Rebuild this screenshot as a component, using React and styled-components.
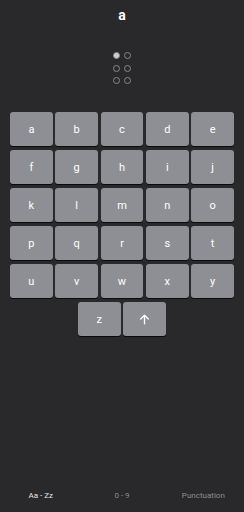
import styled, { createGlobalStyle } from "styled-components";

const GlobalStyle = createGlobalStyle`
  html, body {
    margin: 0;
    padding: 0;
    background: #29282a;
  }
  * {
    box-sizing: border-box;
  }
`;

const Styled = {
  Screen: styled.div`
    width: 244px;
    height: 512px;
    background: #29282a;
    display: flex;
    flex-direction: column;
    align-items: center;
    font-family: Roboto, "Liberation Sans", sans-serif;
    color: #ffffff;
  `,

  Title: styled.div`
    height: 30px;
    padding-top: 6px;
    font-size: 14px;
    font-weight: 700;
    line-height: 18px;
  `,

  Cell: styled.div`
    display: grid;
    grid-template-columns: repeat(2, 7px);
    column-gap: 4px;
    row-gap: 5.5px;
    margin-top: 22px;
  `,

  Dot: styled.span`
    width: 7px;
    height: 7px;
    border-radius: 50%;
    border: 1px solid #8a8a8c;
    background: ${({ filled }) => (filled ? "#cfcfd1" : "transparent")};
  `,

  Keyboard: styled.div`
    margin-top: 28px;
    width: 224px;
    display: flex;
    flex-direction: column;
    gap: 4px;
  `,

  Row: styled.div`
    display: flex;
    justify-content: center;
    gap: 2.5px;
  `,

  Key: styled.button`
    width: 43px;
    height: 34px;
    padding: 0;
    border: none;
    border-radius: 3px;
    background: #8e8f94;
    box-shadow: 0 1px 0 #0a0a0a;
    color: #ffffff;
    font-family: Roboto, "Liberation Sans", sans-serif;
    font-size: 11px;
    display: flex;
    align-items: center;
    justify-content: center;
  `,

  Spacer: styled.div`
    flex: 1;
  `,

  Tabs: styled.div`
    width: 100%;
    height: 30px;
    margin-bottom: 2px;
    display: grid;
    grid-template-columns: 1fr 1fr 1fr;
    align-items: center;
  `,

  Tab: styled.div`
    text-align: center;
    font-size: 8px;
    color: ${({ active }) => (active ? "#e6e6e6" : "#8d8d90")};
  `,
};

const rows = [
  ["a", "b", "c", "d", "e"],
  ["f", "g", "h", "i", "j"],
  ["k", "l", "m", "n", "o"],
  ["p", "q", "r", "s", "t"],
  ["u", "v", "w", "x", "y"],
];

const dots = [true, false, false, false, false, false];

function ArrowUp() {
  return (
    <svg width="13" height="13" viewBox="0 0 24 24" fill="none" stroke="#ffffff" strokeWidth="2.4" strokeLinecap="round" strokeLinejoin="round">
      <path d="M12 20V5" />
      <path d="M5 11l7-7 7 7" />
    </svg>
  );
}

function App() {
  return (
    <>
      <GlobalStyle />
      <Styled.Screen>
        <Styled.Title>a</Styled.Title>
        <Styled.Cell>
          {dots.map((filled, i) => (
            <Styled.Dot key={i} filled={filled} />
          ))}
        </Styled.Cell>
        <Styled.Keyboard>
          {rows.map((row, i) => (
            <Styled.Row key={i}>
              {row.map((letter) => (
                <Styled.Key key={letter}>{letter}</Styled.Key>
              ))}
            </Styled.Row>
          ))}
          <Styled.Row>
            <Styled.Key>z</Styled.Key>
            <Styled.Key>
              <ArrowUp />
            </Styled.Key>
          </Styled.Row>
        </Styled.Keyboard>
        <Styled.Spacer />
        <Styled.Tabs>
          <Styled.Tab active>Aa - Zz</Styled.Tab>
          <Styled.Tab>0 - 9</Styled.Tab>
          <Styled.Tab>Punctuation</Styled.Tab>
        </Styled.Tabs>
      </Styled.Screen>
    </>
  );
}

export default App;
